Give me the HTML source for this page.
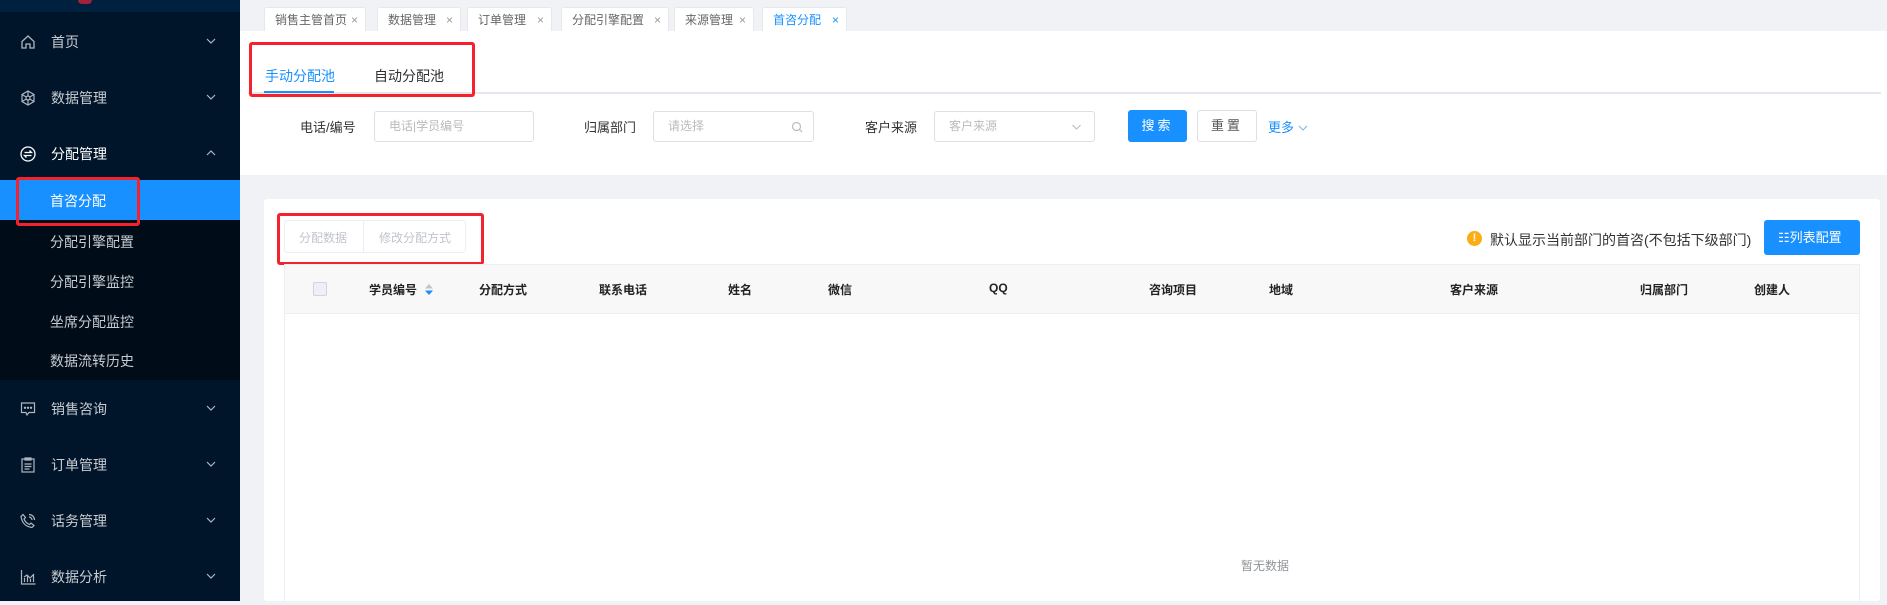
<!DOCTYPE html>
<html><head><meta charset="utf-8">
<style>
*{margin:0;padding:0;box-sizing:border-box}
body{width:1887px;height:601px;overflow:hidden;background:#f0f2f5;font-family:"Liberation Sans","Noto Sans CJK SC",sans-serif;font-size:13px;color:#333;position:relative}
.abs{position:absolute}
#side{left:0;top:0;width:240px;height:601px;background:#001529}
.top{left:0;top:0;width:240px;height:12px;background:#00203f}
.mi{position:absolute;left:0;width:240px;height:56px;color:#c8ccd2;font-size:14px;line-height:56px}
.mi .t{position:absolute;left:51px}
.mi .ic{position:absolute;left:20px;top:20px;width:16px;height:16px}
.mi .ch{position:absolute;left:206px;top:22px;width:10px;height:10px}
.sub{left:0;top:180px;width:240px;height:200px;background:#000c17}
.si{position:absolute;left:50px;color:#c8ccd2;font-size:14px}
.tab{position:absolute;top:7px;height:25px;background:#fff;border:1px solid #e6e8ec;border-bottom:none;border-radius:3px 3px 0 0;font-size:12px;color:#666;line-height:24px;padding-left:10px}
.tab i{position:absolute;right:7px;font-style:normal;color:#999;font-size:12px}
.red{position:absolute;border:3px solid #f5222d;border-radius:3px}
.lbl{position:absolute;font-size:13px;color:#333;top:117px}
.inp{position:absolute;top:111px;height:31px;border:1px solid #dcdfe6;border-radius:3px;background:#fff;color:#bbb;font-size:12px;line-height:29px;padding-left:14px}
.th{position:absolute;top:281px;font-size:12px;font-weight:bold;color:#222}
</style></head><body>
<div id="side" class="abs">
 <div class="abs top"></div>
 <div class="abs" style="left:78px;top:0;width:14px;height:4px;background:#a2203a;border-radius:0 0 7px 7px"></div>
 <div class="mi" style="top:14px">
  <svg class="ic" viewBox="0 0 16 16" fill="none" stroke="#b0b6c0" stroke-width="1.3"><path d="M2 7.5 8 2l6 5.5V14h-4v-4H6v4H2z"/></svg>
  <span class="t">首页</span>
  <svg class="ch" viewBox="0 0 10 10" fill="none" stroke="#b0b6c0" stroke-width="1.2"><path d="M1 3l4 4 4-4"/></svg></div>
 <div class="mi" style="top:70px">
  <svg class="ic" viewBox="0 0 16 16" fill="none" stroke="#b0b6c0" stroke-width="1.2"><path d="M8 1l6 3.5v7L8 15l-6-3.5v-7z"/><circle cx="8" cy="8" r="2"/><path d="M8 1v5M8 10v5M2 4.5l4.3 2.5M9.7 9l4.3 2.5M14 4.5 9.7 7M6.3 9 2 11.5"/></svg>
  <span class="t">数据管理</span>
  <svg class="ch" viewBox="0 0 10 10" fill="none" stroke="#b0b6c0" stroke-width="1.2"><path d="M1 3l4 4 4-4"/></svg></div>
 <div class="mi" style="top:126px;color:#fff">
  <svg class="ic" viewBox="0 0 16 16" fill="none" stroke="#fff" stroke-width="1.3"><circle cx="8" cy="8" r="7"/><path d="M4.5 6.5h7l-2-2M11.5 9.5h-7l2 2"/></svg>
  <span class="t">分配管理</span>
  <svg class="ch" viewBox="0 0 10 10" fill="none" stroke="#b0b6c0" stroke-width="1.2"><path d="M1 7l4-4 4 4"/></svg></div>
 <div class="abs sub"></div>
 <div class="abs" style="left:0;top:180px;width:240px;height:40px;background:#1890ff"></div>
 <div class="si" style="top:191px;color:#fff">首咨分配</div>
 <div class="si" style="top:232px">分配引擎配置</div>
 <div class="si" style="top:272px">分配引擎监控</div>
 <div class="si" style="top:312px">坐席分配监控</div>
 <div class="si" style="top:351px">数据流转历史</div>
 <div class="red" style="left:16px;top:177px;width:124px;height:49px"></div>
 <div class="mi" style="top:381px">
  <svg class="ic" viewBox="0 0 16 16" fill="none" stroke="#b0b6c0" stroke-width="1.2"><path d="M1.5 2h13v9.5H9L7 14l-1-2.5H1.5z"/><circle cx="5" cy="6.8" r=".6" fill="#b0b6c0"/><circle cx="8" cy="6.8" r=".6" fill="#b0b6c0"/><circle cx="11" cy="6.8" r=".6" fill="#b0b6c0"/></svg>
  <span class="t">销售咨询</span>
  <svg class="ch" viewBox="0 0 10 10" fill="none" stroke="#b0b6c0" stroke-width="1.2"><path d="M1 3l4 4 4-4"/></svg></div>
 <div class="mi" style="top:437px">
  <svg class="ic" viewBox="0 0 16 16" fill="none" stroke="#b0b6c0" stroke-width="1.2"><rect x="2" y="2" width="12" height="13"/><path d="M5 1h6v2H5zM4.5 7h7M4.5 9.5h7M4.5 12h5"/></svg>
  <span class="t">订单管理</span>
  <svg class="ch" viewBox="0 0 10 10" fill="none" stroke="#b0b6c0" stroke-width="1.2"><path d="M1 3l4 4 4-4"/></svg></div>
 <div class="mi" style="top:493px">
  <svg class="ic" viewBox="0 0 16 16" fill="none" stroke="#b0b6c0" stroke-width="1.2"><path d="M3 1.5l2.5 3-1.5 1.5c1 2.5 3 4.5 5.5 5.5l1.5-1.5 3 2.5-2 2C6 14 2 10 1 3.5z"/><path d="M9 4a3 3 0 0 1 3 3M9 1.5a5.5 5.5 0 0 1 5.5 5.5"/></svg>
  <span class="t">话务管理</span>
  <svg class="ch" viewBox="0 0 10 10" fill="none" stroke="#b0b6c0" stroke-width="1.2"><path d="M1 3l4 4 4-4"/></svg></div>
 <div class="mi" style="top:549px">
  <svg class="ic" viewBox="0 0 16 16" fill="none" stroke="#b0b6c0" stroke-width="1.2"><path d="M1.5 1v14h14M4.5 13V9M7.5 13V7M10.5 13v-3M13.5 13V6M4 8l3-2 3 3 4-4"/></svg>
  <span class="t">数据分析</span>
  <svg class="ch" viewBox="0 0 10 10" fill="none" stroke="#b0b6c0" stroke-width="1.2"><path d="M1 3l4 4 4-4"/></svg></div>
</div>

<div class="tab" style="left:264px;width:102px">销售主管首页<i>×</i></div>
<div class="tab" style="left:377px;width:84px">数据管理<i>×</i></div>
<div class="tab" style="left:467px;width:85px">订单管理<i>×</i></div>
<div class="tab" style="left:561px;width:108px">分配引擎配置<i>×</i></div>
<div class="tab" style="left:674px;width:80px">来源管理<i>×</i></div>
<div class="tab" style="left:762px;width:85px;color:#1890ff">首咨分配<i style="color:#1890ff">×</i></div>

<div class="abs" style="left:240px;top:31px;width:1647px;height:144px;background:#fff"></div>
<div class="abs" style="left:248px;top:92px;width:1633px;height:2px;background:#e4e7ed"></div>
<div class="abs" style="left:265px;top:66px;font-size:14px;color:#1890ff">手动分配池</div>
<div class="abs" style="left:264px;top:91px;width:70px;height:2px;background:#1890ff"></div>
<div class="abs" style="left:374px;top:66px;font-size:14px;color:#303133">自动分配池</div>
<div class="red" style="left:249px;top:42px;width:226px;height:55px"></div>

<div class="lbl" style="left:300px">电话/编号</div>
<div class="inp" style="left:374px;width:160px">电话|学员编号</div>
<div class="lbl" style="left:584px">归属部门</div>
<div class="inp" style="left:653px;width:161px">请选择
 <svg class="abs" style="right:10px;top:9px" width="12" height="12" viewBox="0 0 12 12" fill="none" stroke="#bbb" stroke-width="1.2"><circle cx="5.5" cy="5.5" r="4"/><path d="M8.5 8.5l2.5 2.5"/></svg></div>
<div class="lbl" style="left:865px">客户来源</div>
<div class="inp" style="left:934px;width:161px">客户来源
 <svg class="abs" style="right:12px;top:10px" width="11" height="10" viewBox="0 0 10 10" fill="none" stroke="#bbb" stroke-width="1.1"><path d="M1 3l4 4 4-4"/></svg></div>
<div class="abs" style="left:1128px;top:110px;width:59px;height:32px;background:#1890ff;border-radius:3px;color:#fff;font-size:13px;text-align:center;line-height:32px;letter-spacing:3px">搜索</div>
<div class="abs" style="left:1197px;top:110px;width:60px;height:32px;border:1px solid #dcdfe6;border-radius:3px;background:#fff;color:#555;font-size:13px;text-align:center;line-height:30px;letter-spacing:3px">重置</div>
<div class="abs" style="left:1268px;top:117px;color:#1890ff;font-size:13px">更多 <svg width="10" height="8" viewBox="0 0 10 8" fill="none" stroke="#7ab8f5" stroke-width="1.1"><path d="M1 2l4 4 4-4"/></svg></div>

<div class="abs" style="left:264px;top:199px;width:1616px;height:402px;background:#fff;border-radius:3px"></div>
<div class="abs" style="left:284px;top:220px;width:182px;height:33px;border:1px solid #ebeef5;border-radius:3px"></div>
<div class="abs" style="left:363px;top:220px;width:1px;height:33px;background:#ebeef5"></div>
<div class="abs" style="left:299px;top:229px;font-size:12px;color:#c0c4cc">分配数据</div>
<div class="abs" style="left:379px;top:229px;font-size:12px;color:#c0c4cc">修改分配方式</div>
<div class="red" style="left:277px;top:213px;width:207px;height:52px"></div>

<div class="abs" style="left:1467px;top:231px;width:15px;height:15px;border-radius:50%;background:#faad14;color:#fff;font-size:11px;font-weight:bold;text-align:center;line-height:15px">!</div>
<div class="abs" style="left:1490px;top:230px;font-size:14px;color:#333">默认显示当前部门的首咨(不包括下级部门)</div>
<div class="abs" style="left:1764px;top:220px;width:96px;height:35px;background:#1890ff;border-radius:3px;color:#fff;font-size:13px;line-height:35px;padding-left:14px">&#x2637;列表配置</div>

<div class="abs" style="left:284px;top:264px;width:1576px;height:337px;border:1px solid #ebeef5;border-bottom:none"></div>
<div class="abs" style="left:285px;top:265px;width:1574px;height:49px;background:#f8f8f9;border-bottom:1px solid #ebeef5"></div>
<div class="abs" style="left:313px;top:282px;width:14px;height:14px;border:1px solid #d0d4dc;border-radius:2px;background:#eef0f6"></div>
<div class="th" style="left:369px">学员编号</div>
<svg class="abs" style="left:424px;top:283px" width="10" height="13" viewBox="0 0 10 13"><path d="M5 1l4 4.5H1z" fill="#c0c4cc"/><path d="M5 12L1 7.5h8z" fill="#1890ff"/></svg>
<div class="th" style="left:479px">分配方式</div>
<div class="th" style="left:599px">联系电话</div>
<div class="th" style="left:728px">姓名</div>
<div class="th" style="left:828px">微信</div>
<div class="th" style="left:989px">QQ</div>
<div class="th" style="left:1149px">咨询项目</div>
<div class="th" style="left:1269px">地域</div>
<div class="th" style="left:1450px">客户来源</div>
<div class="th" style="left:1640px">归属部门</div>
<div class="th" style="left:1754px">创建人</div>
<div class="abs" style="left:1241px;top:557px;font-size:12px;color:#909399">暂无数据</div>
</body></html>
